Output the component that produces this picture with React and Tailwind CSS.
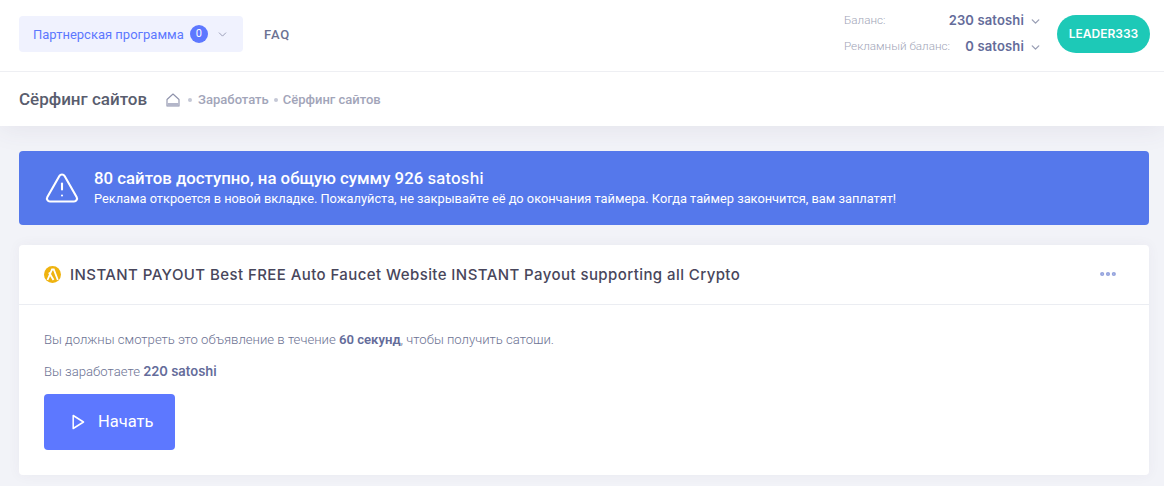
import { ChevronDown, TriangleAlert, MoreHorizontal } from "lucide-react";

function BalanceRow({ label, value }) {
  return (
    <div className="flex items-center justify-between h-[26px]">
      <span className="text-[11.7px] text-[#a1a5b7] font-light">{label}</span>
      <span className="flex items-center gap-[5px]">
        <span className="text-[13px] font-semibold text-[#646c9a] font-['Inter'] tracking-[0.15px]">{value}</span>
        <ChevronDown size={13} strokeWidth={2.5} className="text-[#9a9fb5]" />
      </span>
    </div>
  );
}

function HomeIcon() {
  return (
    <svg width="14" height="14" viewBox="0 0 14 14" fill="none" stroke="#8e92ab" strokeWidth="1.1">
      <path d="M1 6.5 L7 1 L13 6.5 V13 H1 Z" strokeLinejoin="round" />
      <path d="M1.5 10 H12.5 V13 H1.5 Z" fill="#b3b6c9" stroke="none" />
    </svg>
  );
}

// gold round coin with the white mark cut through it
function CoinIcon() {
  return (
    <svg width="17" height="17" viewBox="0 0 17 17">
      <circle cx="8.5" cy="8.5" r="8.5" fill="#efb30f" />
      <path d="M3.5 14 L8 3.5 L9.8 3.5 L13.8 14" fill="none" stroke="#fff" strokeWidth="1.8" />
      <path d="M5 6.5 L9.5 14" fill="none" stroke="#fff" strokeWidth="1.9" />
    </svg>
  );
}

function PlayIcon() {
  return (
    <svg width="13" height="16" viewBox="0 0 13 16" fill="none" stroke="currentColor" strokeWidth="1.5">
      <path d="M1.2 1.5 L11.5 8 L1.2 14.5 Z" strokeLinejoin="round" />
    </svg>
  );
}

export default function App() {
  return (
    <div className="h-[486px] overflow-hidden bg-[#f2f3f8] font-['Roboto',sans-serif]">
      <header className="bg-white shadow-[0_4px_24px_rgba(82,63,105,0.08)]">
        <div className="h-[72px] pb-[3px] border-b border-[#eeeff3] flex items-center justify-between pl-[19px] pr-[14px]">
          <div className="flex items-center">
            <button className="h-[36px] w-[224px] rounded-[4px] bg-[#f0f2fe] flex items-center pl-[14px] text-[#5d78ff]">
              <span className="text-[13px] mt-[2px]">Партнерская программа</span>
              <span className="ml-[6px] w-[18px] h-[18px] rounded-full bg-[#5d78ff] text-white text-[11px] flex items-center justify-center">0</span>
              <ChevronDown size={13} strokeWidth={1.2} className="ml-[8px] text-[#6c7293]" />
            </button>
            <span className="ml-[21px] mt-[2px] text-[13px] font-medium text-[#6c7293] tracking-[0.9px]">FAQ</span>
          </div>
          <div className="flex items-center gap-[15px]">
            <div className="w-[198px]">
              <BalanceRow label="Баланс:" value="230 satoshi" />
              <BalanceRow label="Рекламный баланс:" value="0 satoshi" />
            </div>
            <button className="h-[38px] w-[93px] rounded-full bg-[#1dc9b7] text-white text-[12px] font-semibold font-['Inter']">
              LEADER333
            </button>
          </div>
        </div>
        <div className="h-[54px] pt-[2px] flex items-center pl-[19px]">
          <h1 className="text-[17px] font-medium text-[#595d6e]">Сёрфинг сайтов</h1>
          <span className="ml-[19px] flex items-center text-[13px] font-medium text-[#a2a5b9]">
            <HomeIcon />
            <span className="ml-[8px] mr-[6px] w-[4px] h-[4px] rounded-full bg-[#c5c8d6]" />
            <span>Заработать</span>
            <span className="ml-[5px] mr-[5px] w-[4px] h-[4px] rounded-full bg-[#c5c8d6]" />
            <span>Сёрфинг сайтов</span>
          </span>
        </div>
      </header>

      <main className="pl-[19px] pr-[15px] pt-[25px]">
        <div className="h-[74px] rounded-[4px] bg-[#5578eb] flex items-center pl-[25px] text-white">
          <TriangleAlert size={36} strokeWidth={1.4} />
          <div className="ml-[14px]">
            <div className="text-[16.8px] font-medium leading-[20px] mb-[2px]">
              80 сайтов доступно, на общую сумму 926 <span className="font-['Inter'] text-[16px] tracking-[0.2px]">satoshi</span>
            </div>
            <div className="text-[12.8px] leading-[18px]">
              Реклама откроется в новой вкладке. Пожалуйста, не закрывайте её до окончания таймера. Когда таймер закончится, вам заплатят!
            </div>
          </div>
        </div>

        <section className="mt-[20px] h-[230px] bg-white rounded-[4px] shadow-[0_0_13px_rgba(82,63,105,0.05)]">
          <div className="h-[60px] border-b border-[#ebedf2] flex items-center justify-between pl-[25px] pr-[31px]">
            <div className="flex items-center gap-[9px]">
              <CoinIcon />
              <h2 className="mt-[2px] text-[15px] font-medium text-[#48465b] font-['Inter'] tracking-[0.42px]">
                INSTANT PAYOUT Best FREE Auto Faucet Website INSTANT Payout supporting all Crypto
              </h2>
            </div>
            <MoreHorizontal size={20} strokeWidth={3} className="text-[#93a2dd] -mt-[2px]" />
          </div>
          <div className="pl-[25px] pt-[25px] text-[13.13px] text-[#6c7293] font-light">
            <p className="leading-[20px]">
              Вы должны смотреть это объявление в течение <b className="font-semibold text-[#646c9a]">60 секунд</b>, чтобы получить сатоши.
            </p>
            <p className="mt-[12px] leading-[19px]">
              Вы заработаете <b className="font-semibold text-[#646c9a] font-['Inter'] text-[13px]">220 satoshi</b>
            </p>
            <button className="mt-[13px] h-[56px] w-[131px] rounded-[4px] bg-[#5d78ff] text-white flex items-center pl-[28px] gap-[13px] text-[16.5px] font-normal">
              <PlayIcon />
              Начать
            </button>
          </div>
        </section>
      </main>
    </div>
  );
}
